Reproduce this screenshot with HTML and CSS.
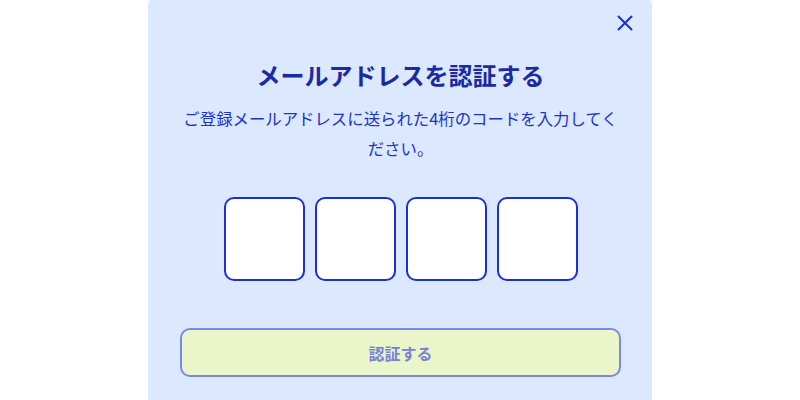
FILE: index.html
```html
<!DOCTYPE html>
<html lang="ja">
<head>
<meta charset="utf-8">
<link rel="stylesheet" href="styles.css">
</head>
<body>
<div class="page">
  <div class="panel">
    <div class="header">
      <button class="close" aria-label="閉じる">
        <svg width="16" height="16" viewBox="0 0 16 16"><path d="M1.5 1.5 L14.5 14.5 M14.5 1.5 L1.5 14.5" stroke="#1d2fd4" stroke-width="2" stroke-linecap="round" fill="none"/></svg>
      </button>
    </div>
    <div class="content">
      <h1 class="title">メールアドレスを認証する</h1>
      <p class="desc">ご登録メールアドレスに送られた4桁のコードを入力してください。</p>
      <div class="codes">
        <div class="code"></div>
        <div class="code"></div>
        <div class="code"></div>
        <div class="code"></div>
      </div>
      <button class="submit">認証する</button>
    </div>
  </div>
</div>
</body>
</html>
```
FILE: styles.css
```css
html, body {
  margin: 0;
  padding: 0;
  background: #ffffff;
}
body {
  font-family: "Noto Sans CJK JP", "Noto Sans", sans-serif;
  overflow: hidden;
  height: 400px;
}
.page {
  display: flex;
  padding-left: 148px;
}
.panel {
  width: 504px;
  height: 420px;
  background: #dbe8fd;
  border-radius: 4px 4px 0 0;
  display: flex;
  flex-direction: column;
}
.header {
  display: flex;
  justify-content: flex-end;
  padding: 15px 19px 0 0;
}
.close {
  width: 16px;
  height: 16px;
  padding: 0;
  border: 0;
  background: none;
  display: flex;
}
.content {
  display: flex;
  flex-direction: column;
  align-items: center;
  padding: 0 31px 0 32px;
}
.title {
  margin: 28px 0 0;
  font-size: 24px;
  line-height: 32px;
  font-weight: 700;
  color: #1a29a4;
  text-align: center;
}
.desc {
  margin: 12px 0 0;
  font-size: 16.4px;
  line-height: 30px;
  color: #2132cc;
  text-align: center;
  width: 441px;
}
.codes {
  margin-top: 34px;
  display: flex;
  gap: 10px;
}
.code {
  width: 77px;
  height: 80px;
  border: 2px solid #1d2fd4;
  border-radius: 10px;
  background: #ffffff;
}
.submit {
  margin-top: 47px;
  width: 441px;
  height: 49px;
  border: 2px solid #7b88ea;
  border-radius: 10px;
  background: #eaf6c9;
  color: #7a80d6;
  font-family: "Noto Sans CJK JP", "Noto Sans", sans-serif;
  font-size: 16px;
  font-weight: 700;
  box-sizing: border-box;
}
```
